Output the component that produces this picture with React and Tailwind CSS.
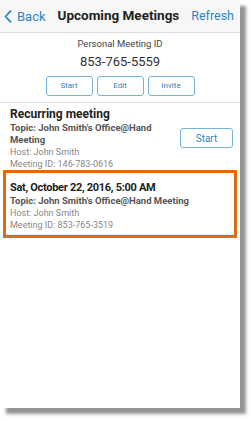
import React from "react";

const font = { fontFamily: "Roboto, 'Liberation Sans', sans-serif" };

const SmallButton = ({ label }) => (
  <button className="w-[47px] h-[20px] rounded-[3px] border border-[#74b4d8] bg-white text-[8px] text-[#2a86c6] flex items-center justify-center">
    {label}
  </button>
);

const App = () => {
  return (
    <div className="w-[251px] h-[421px] bg-white overflow-hidden" style={font}>
      <div className="w-[240px] h-[408px] bg-white shadow-[6px_6px_3px_rgba(0,0,0,0.42)] flex flex-col">
        {/* header */}
        <div className="h-[33px] bg-[#f7f7f7] border-b border-[#dcdcdc] flex items-center justify-between pl-[4px] pr-[6px]">
          <div className="flex items-center gap-[5px] text-[#2a86c6]">
            <svg width="8" height="13" viewBox="0 0 8 13" fill="none">
              <path d="M6.5 1.2L1.5 6.5L6.5 11.8" stroke="#2a86c6" strokeWidth="1.8" strokeLinecap="round" strokeLinejoin="round" />
            </svg>
            <span className="text-[13px] leading-none">Back</span>
          </div>
          <div className="text-[13.5px] font-bold text-[#222] leading-none">Upcoming Meetings</div>
          <div className="text-[12.5px] text-[#2a86c6] leading-none">Refresh</div>
        </div>

        {/* personal meeting id */}
        <div className="flex flex-col items-center pt-[5px] pb-[6px] border-b border-[#e2e2e2]">
          <div className="text-[9.5px] leading-[12px] text-[#444]">Personal Meeting ID</div>
          <div className="mt-[4px] text-[13px] leading-[16px] text-[#333]">853-765-5559</div>
          <div className="mt-[6px] flex gap-[4px]">
            <SmallButton label="Start" />
            <SmallButton label="Edit" />
            <SmallButton label="Invite" />
          </div>
        </div>

        {/* recurring meeting */}
        <div className="flex items-start pl-[10px] pr-[7px] pt-[4px]">
          <div className="flex-1 pr-[10px]">
            <div className="text-[12px] leading-[15px] font-bold text-[#222]">Recurring meeting</div>
            <div className="text-[9.5px] leading-[12px] font-bold text-[#555]">
              Topic: John Smith's Office@Hand Meeting
            </div>
            <div className="text-[9px] leading-[12px] text-[#888]">Host: John Smith</div>
            <div className="text-[9px] leading-[12px] text-[#888]">Meeting ID: 146-783-0616</div>
          </div>
          <button className="mt-[21px] w-[53px] h-[20px] rounded-[3px] border border-[#74b4d8] bg-white text-[10px] text-[#2a86c6] flex items-center justify-center">
            Start
          </button>
        </div>

        {/* highlighted meeting */}
        <div className="mx-[3px] border-[3px] border-[#e0680e]">
          <div className="pl-[4px] pt-[7px] pb-[3px] border-b border-[#e6e6e6]">
            <div className="text-[11px] leading-[15px] font-bold text-[#222] tracking-[-0.3px]">Sat, October 22, 2016, 5:00 AM</div>
            <div className="text-[9.5px] leading-[12px] font-bold text-[#555]">Topic: John Smith's Office@Hand Meeting</div>
            <div className="text-[9px] leading-[12px] text-[#888]">Host: John Smith</div>
            <div className="text-[9px] leading-[12px] text-[#888]">Meeting ID: 853-765-3519</div>
          </div>
        </div>
      </div>
    </div>
  );
};

export default App;
